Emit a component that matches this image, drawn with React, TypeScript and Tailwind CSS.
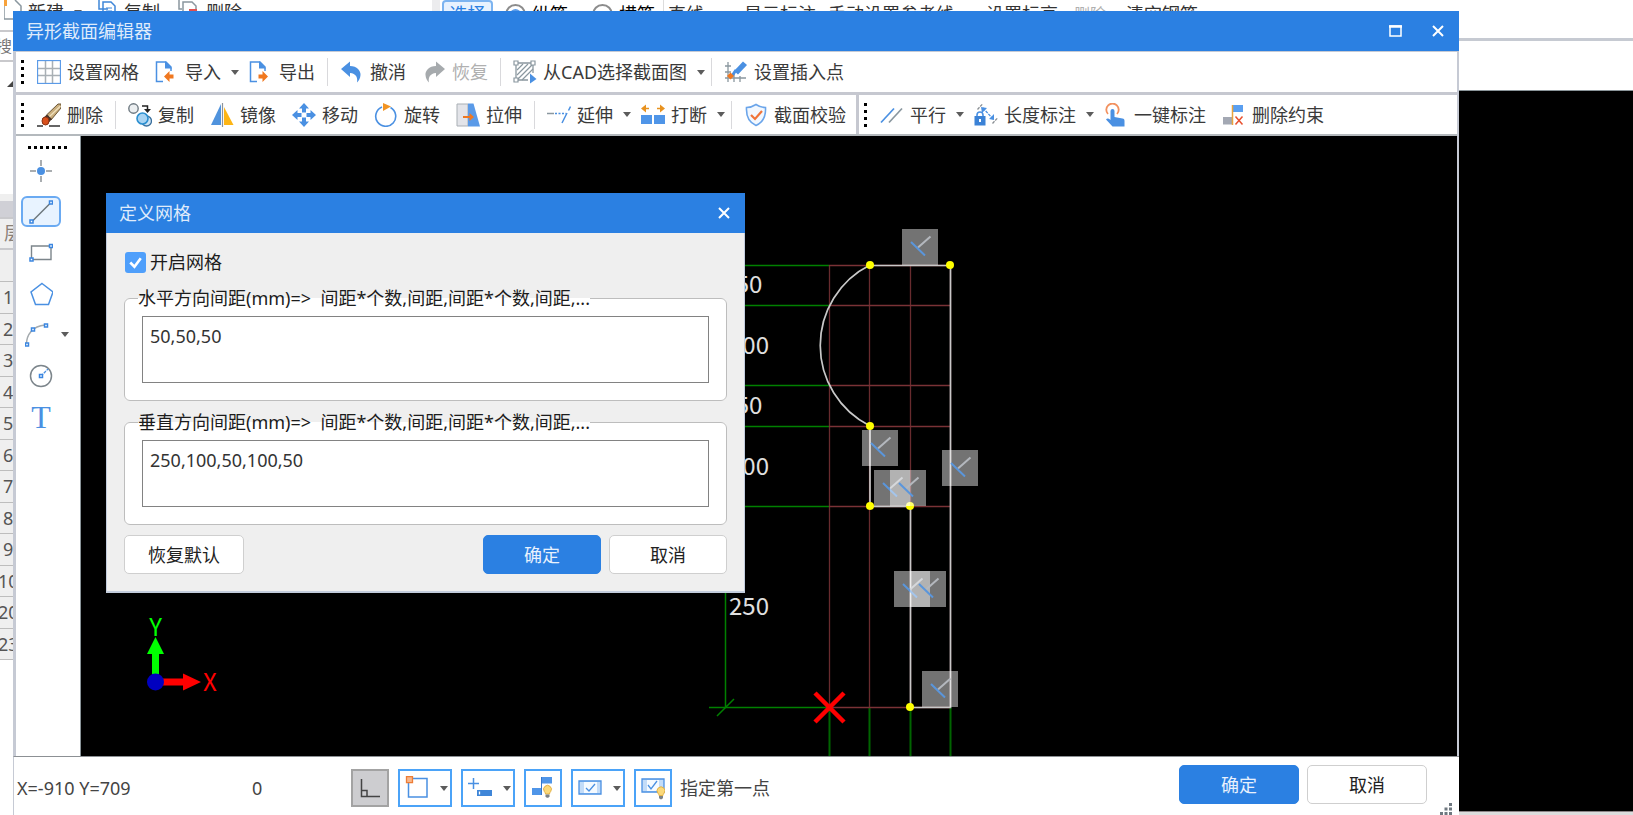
import type { ReactNode } from "react";

/* ---------- icon primitives ---------- */

const BLUE = "#4a90e2";
const SLATE = "#8a979f";
const ORANGE = "#f07820";

function Icon({ children, size = 24 }: { children: ReactNode; size?: number }) {
  return (
    <svg width={size} height={size} viewBox="0 0 24 24" fill="none" aria-hidden="true" className="shrink-0">
      {children}
    </svg>
  );
}

function Caret() {
  return (
    <svg width="8" height="5" viewBox="0 0 8 5" aria-hidden="true" className="shrink-0">
      <path d="M0 0h8L4 5z" fill="#5c5c5c" />
    </svg>
  );
}

const GridIcon = () => (
  <Icon>
    <path d="M8.5 1v22M15.5 1v22M1 8.5h22M1 15.5h22" stroke="#a9b0b5" strokeWidth="1.5" />
    <rect x="0.5" y="0.5" width="23" height="23" stroke="#5b9be8" strokeWidth="1.3" />
  </Icon>
);

function PageIcon({ out = false }: { out?: boolean }) {
  return (
    <Icon>
      <path d="M8 21.500H1.500V2H11l5 5V11" stroke={BLUE} strokeWidth="1.5" />
      <path d="M10 1l7 7.5h-7z" fill={BLUE} />
      {out ? (
        <path d="M19 16.500l-5.500-5.500v3.500h-4v4h4V22z" fill={ORANGE} />
      ) : (
        <path d="M9 16.500l5.500-5.500v3.500h4v4h-4V22z" fill={ORANGE} />
      )}
    </Icon>
  );
}

const UndoIcon = () => (
  <Icon>
    <path d="M1 9l9-7.500v4.500c7 0 11 5 10.500 9-.2 3-1.500 5.500-3.500 7.500 1-5-1-9-7-9.500v4z" fill={BLUE} />
  </Icon>
);

const RedoIcon = () => (
  <Icon>
    <path d="M23 9l-9-7.500v4.500c-7 0-11 5-10.500 9 .2 3 1.500 5.500 3.500 7.500-1-5 1-9 7-9.500v4z" fill="#a6aaad" />
  </Icon>
);

const CadIcon = () => (
  <Icon>
    <path d="M3 3h17v10M3 3v17h12" stroke={SLATE} strokeWidth="1.300" />
    <path d="M4 10l6-6M4 15L15 4M4 20L20 4M9 20L20 9" stroke={SLATE} strokeWidth="1.200" />
    <path d="M1 1h4v4H1zM18 1h4v4h-4zM1 18h4v4H1z" fill="#fff" stroke={SLATE} strokeWidth="1.200" />
    <path d="M17 13.500l6.500 5.500-6.500 4.500z" fill={BLUE} />
  </Icon>
);

const InsertPointIcon = () => (
  <Icon>
    <path d="M4 2v20M10 12v10M16 16v6M1 6h6M1 12h6M1 18h21" stroke={SLATE} strokeWidth="1.300" />
    <path d="M10 11L19 1.500l4 3.500-9 9.500z" fill={BLUE} />
    <path d="M12 10l-4 6" stroke={BLUE} strokeWidth="3" />
    <path d="M6.500 12.500l3.500 3.500-3.500 3.500L3 16z" fill={ORANGE} />
  </Icon>
);

const EraserIcon = () => (
  <Icon>
    <path d="M0 23h6M12 23h11" stroke="#333" strokeWidth="1.300" />
    <path d="M9.500 12L21 1l3 0v4L14 17z" fill="#c9ad7c" stroke="#6b5535" />
    <path d="M12 14L23.500 3" stroke="#efe0bd" strokeWidth="1.300" />
    <path d="M5.500 15.500l4.500-4 5 4.500-4.500 5z" fill="#4a3328" />
    <ellipse cx="8.500" cy="18" rx="3.500" ry="4" fill="#d9501c" stroke="#8b3212" />
  </Icon>
);

const CopyIcon = () => (
  <Icon>
    <circle cx="5.500" cy="5.500" r="4.700" fill="#eceff1" stroke="#6f7a82" strokeWidth="1.400" />
    <path d="M14 3h5.500v4" stroke="#222" strokeWidth="1.500" />
    <path d="M16 6h7l-3.500 4z" fill="#222" />
    <circle cx="18.500" cy="18" r="5" fill="#cfe4f5" stroke="#3a6f9c" strokeWidth="1.300" />
    <circle cx="14.500" cy="15.500" r="5.500" fill="#a8d3f2" stroke="#2b8fd0" strokeWidth="1.600" />
  </Icon>
);

const MirrorIcon = () => (
  <Icon>
    <path d="M11 1v21H1z" fill="#5093dd" />
    <path d="M14 4v18h9.500z" fill="#fdb515" />
    <path d="M12.500 0v24" stroke="#8d949b" strokeWidth="1.200" />
  </Icon>
);

const MoveIcon = () => (
  <Icon>
    <path
      d="M12 0l5 5.500h-3v4h-4v-4H7zM12 24l5-5.500h-3v-4h-4v4H7zM0 12l5.500-5v3h4v4h-4v3zM24 12l-5.500-5v3h-4v4h4v3z"
      fill={BLUE}
    />
  </Icon>
);

const RotateIcon = () => (
  <Icon>
    <path d="M16.500 4.500A10 10 0 1 1 8 4" stroke={BLUE} strokeWidth="1.600" />
    <path d="M9 0l8 3.500L9 8z" fill="#f29423" />
  </Icon>
);

const StretchIcon = () => (
  <Icon>
    <path d="M1 1h11v22H1z" fill="#e3e4e9" stroke="#a9afb5" />
    <path d="M12 .5h5.500L24 23.500H12z" fill="#5a9ae8" />
    <path d="M7 14h8" stroke={ORANGE} strokeWidth="2" />
    <path d="M13.500 10l4.500 4-4.500 4z" fill={ORANGE} />
  </Icon>
);

const ExtendIcon = () => (
  <Icon>
    <path d="M0 10.500h7" stroke={SLATE} strokeWidth="1.500" />
    <path d="M8 10.500h11" stroke={BLUE} strokeWidth="1.500" strokeDasharray="2 1.500" />
    <path d="M23.500 3.500l-2 4M20 10l-5 10" stroke={BLUE} strokeWidth="1.500" />
  </Icon>
);

const BreakIcon = () => (
  <Icon>
    <path d="M0 12h11v9H0zM13 12h11v9H13z" fill="#4f95e8" />
    <path d="M3 5.500h5M16 5.500h5" stroke="#e8921f" strokeWidth="1.600" />
    <path d="M5 1.500v8L0 5.500zM19 1.500v8l5-4z" fill="#e8921f" />
  </Icon>
);

const ShieldIcon = () => (
  <Icon>
    <path d="M12 1.500c3 2 6 3 9.500 3 .5 9-2.500 15-9.500 18-7-3-10-9-9.500-18 3.500 0 6.500-1 9.500-3z" fill="#f2f8ff" stroke="#6ba5ea" strokeWidth="1.600" />
    <path d="M7 12l4 4 7-8" stroke="#f0743a" strokeWidth="2.200" />
  </Icon>
);

const ParallelIcon = () => (
  <Icon>
    <path d="M1 19.500L14 5.500" stroke={BLUE} strokeWidth="1.700" />
    <path d="M9 19.500L22 5.500" stroke={SLATE} strokeWidth="1.700" />
  </Icon>
);

const LengthIcon = () => (
  <Icon>
    <path d="M3.500 6.500l5-5.500M18.500 20.500l5-5.500" stroke="#8a8f94" strokeWidth="1.300" strokeDasharray="3 1" />
    <path d="M9 5l10 11" stroke={BLUE} strokeWidth="1.300" strokeDasharray="3 1" />
    <path d="M7 4l6 1-5 5zM20 17v-6l-5 5z" fill={BLUE} />
    <path d="M3 13.500V12a3 3 0 0 1 6 0v1.500" stroke={BLUE} strokeWidth="1.600" />
    <rect x="0.500" y="13" width="11" height="9.500" fill="#3b82d6" />
    <path d="M6 16v3" stroke="#fff" strokeWidth="2" />
  </Icon>
);

const TouchIcon = () => (
  <Icon>
    <path d="M4 11a6.200 6.200 0 1 1 9 0" stroke="#f2915f" strokeWidth="1.800" />
    <path d="M6.500 8a2 2 0 0 1 4 0v6l8 1.500c1.500.3 2 1.200 2 2.500v5.500H8.500L2 16.500c1-1.500 2.500-1.500 4.500.5z" fill={BLUE} />
  </Icon>
);

const RemoveConstraintIcon = () => (
  <Icon>
    <path d="M1 14h9v7.500H1z" fill="#a3a8b3" />
    <path d="M11 2h10v7H11z" fill="#5a9ff0" />
    <path d="M10.500 2v20" stroke="#e8a33c" strokeWidth="1.500" />
    <path d="M13.500 13.500l7 8M20.500 13.500l-7 8" stroke="#e8502e" strokeWidth="1.500" />
  </Icon>
);

/* small square vertex marker used on the drawing tools */
const Handle = ({ x, y }: { x: number; y: number }) => (
  <rect x={x - 1.5} y={y - 1.5} width="3" height="3" fill="#fff" stroke="#3b86e0" strokeWidth="1.500" />
);

const PointTool = () => (
  <Icon>
    <path d="M12 1v6M12 17v6M1 12h6M17 12h6" stroke="#8d9296" strokeWidth="1.500" />
    <circle cx="12" cy="12" r="4" fill={BLUE} />
  </Icon>
);

const LineTool = () => (
  <Icon>
    <path d="M3 21.500L21.500 3" stroke="#6c757b" strokeWidth="1.500" />
    <Handle x={2.5} y={21.5} />
    <Handle x={22} y={2.5} />
  </Icon>
);

const RectTool = () => (
  <Icon>
    <path d="M2.500 5h19.500v13.500H2.500z" stroke="#7c858b" strokeWidth="1.400" />
    <Handle x={2.5} y={18.5} />
    <Handle x={22} y={5} />
  </Icon>
);

const PolygonTool = () => (
  <Icon>
    <path d="M13 1.500l11 8.500-4.500 12.500H6.500L2 10z" stroke={BLUE} strokeWidth="1.500" />
  </Icon>
);

const ArcTool = () => (
  <Icon>
    <path d="M1.500 21c0-9 6-18 18.500-19" stroke="#a4aaae" strokeWidth="1.500" />
    <Handle x={2} y={21.5} />
    <Handle x={8} y={6.5} />
    <Handle x={21} y={2.5} />
  </Icon>
);

const CircleTool = () => (
  <Icon>
    <circle cx="12" cy="12" r="10.500" stroke="#7c858b" strokeWidth="1.500" />
    <path d="M12 12l7-7" stroke={BLUE} strokeWidth="1.300" strokeDasharray="3 1" />
    <Handle x={12} y={12} />
  </Icon>
);

const OrthoIcon = () => (
  <Icon>
    <path d="M3.500 3v17.500H22M3.500 14.500H9v6" stroke="#444" strokeWidth="1.500" />
  </Icon>
);

const SnapIcon = () => (
  <Icon>
    <path d="M3.500 2.500H22V21H3.500z" stroke={BLUE} strokeWidth="1.500" />
    <path d="M1.500 .7h6v6h-6z" fill="#f8b68a" stroke="#ee7d35" strokeWidth="1.300" />
  </Icon>
);

const CoordIcon = () => (
  <Icon>
    <path d="M0 7.500h11M5.500 2v11" stroke={BLUE} strokeWidth="1.500" />
    <path d="M9 14h15v6H9z" fill="#3f86d8" />
    <path d="M11.500 15.500v3" stroke="#fff" strokeWidth="1.300" />
  </Icon>
);

const Bulb = () => (
  <>
    <path d="M13.300 15.500a3.900 3.900 0 1 1 6.400 0c-.8 1-1.200 1.600-1.200 2.500h-4c0-.9-.4-1.500-1.200-2.500z" fill="#fbd97a" stroke="#e0ac3c" strokeWidth=".9" />
    <path d="M14.500 18.500h4v2l-1.200 1.200h-1.600l-1.200-1.200z" fill="#7d8285" />
  </>
);

const ConstraintBulbIcon = () => (
  <Icon>
    <path d="M1 12h10v7H1zM11 1h10v6.500H11z" fill="#4f95e8" />
    <path d="M10.500 1v18" stroke="#3577cc" />
    <Bulb />
  </Icon>
);

const CheckPanelIcon = () => (
  <Icon>
    <path d="M1 5h22v13H1z" fill="#c3dcf8" stroke={BLUE} strokeWidth="1.300" />
    <path d="M6 6h13v11H6z" fill="#f5faff" />
    <path d="M8 12l3 3 6-7" stroke={BLUE} strokeWidth="1.300" />
  </Icon>
);

const CheckBulbIcon = () => (
  <Icon>
    <path d="M1 3h22v13H1z" fill="#c3dcf8" stroke={BLUE} strokeWidth="1.300" />
    <path d="M6 4h12v11H6z" fill="#f5faff" />
    <path d="M7 9l3 4 6-8" stroke={BLUE} strokeWidth="1.300" />
    <g transform="translate(3.500 1.500)">
      <Bulb />
    </g>
  </Icon>
);

/* ---------- shared widgets ---------- */

function ToolButton({
  icon,
  label,
  menu = false,
  disabled = false,
}: {
  icon: ReactNode;
  label: string;
  menu?: boolean;
  disabled?: boolean;
}) {
  return (
    <button
      type="button"
      disabled={disabled}
      className={`flex h-8 shrink-0 items-center gap-1.5 rounded-md pl-1.5 text-[#3a3a3a] hover:bg-[#e8f2fe] disabled:text-[#b0b0b0] ${
        menu ? "pr-0.5" : "pr-2"
      }`}
    >
      {icon}
      <span className={menu ? "flex items-center gap-2.5" : "flex items-center"}>
        {label}
        {menu && <Caret />}
      </span>
    </button>
  );
}

const Separator = () => <div className="mr-1 ml-0.5 h-7 w-px shrink-0 bg-[#d9d9dc]" />;

function Grip() {
  return (
    <div className="flex w-2 shrink-0 flex-col gap-1">
      {[0, 1, 2, 3].map((i) => (
        <span key={i} className="size-[3px] bg-black" />
      ))}
    </div>
  );
}

function DialogButton({ label, primary = false, size }: { label: string; primary?: boolean; size: string }) {
  return (
    <button
      type="button"
      className={`rounded-[5px] border ${size} ${
        primary ? "border-[#2b80e2] bg-[#2b80e2] text-[#e8f1fd]" : "border-[#cfcfcf] bg-white text-[#222]"
      }`}
    >
      {label}
    </button>
  );
}

const CloseGlyph = () => (
  <svg width="12" height="12" viewBox="0 0 12 12" aria-hidden="true">
    <path d="M1 1l10 10M11 1L1 11" stroke="#fff" strokeWidth="2" />
  </svg>
);

/* ---------- application window behind the editor ---------- */

const floors = ["1", "2", "3", "4", "5", "6", "7", "8", "9", "10", "20", "23"];

function HostApplication() {
  return (
    <div className="flex h-full">
      <div className="flex w-[432px] shrink-0 flex-col">
        <div className="flex h-[30px] shrink-0 items-start pl-1 text-[#333]">
          <svg width="22" height="22" viewBox="0 0 22 22" fill="none" aria-hidden="true">
            <path d="M0 0v19h17V6l-6-6" stroke="#8a979f" strokeWidth="1.500" />
            <path d="M0 0h3v6H0z" fill="#f7a23b" />
          </svg>
          <span className="-mt-0.5 ml-0.5 flex w-[68px] items-center gap-2.5 leading-7">
            新建 <Caret />
          </span>
          <svg width="18" height="22" viewBox="0 0 18 22" fill="none" aria-hidden="true" className="ml-0.5">
            <path d="M10 9H1V0M5 2h8l4 4v14H5z" stroke="#3f86d8" strokeWidth="1.500" />
            <path d="M8 8h6M8 11h6" stroke="#3f86d8" />
          </svg>
          <span className="-mt-0.5 ml-2 w-[52px] leading-7">复制</span>
          <svg width="20" height="22" viewBox="0 0 20 22" fill="none" aria-hidden="true" className="ml-0.5">
            <path d="M4 9H1V0M5 2h9l4 4v14H5z" stroke="#8a979f" strokeWidth="1.500" />
            <path d="M11 10h8" stroke="#e05050" strokeWidth="2" />
          </svg>
          <span className="-mt-0.5 ml-2 leading-7">删除</span>
        </div>
        <div className="flex h-8 shrink-0 items-center border-y-2 border-[#c9c9cc] text-base text-[#777]">
          <span className="-ml-1">搜</span>
        </div>
        <div className="h-[132px] shrink-0 pt-4 pl-[7px]">
          <svg width="10" height="9" viewBox="0 0 10 9" aria-hidden="true">
            <path d="M0 9L9 0v9z" fill="#444" />
          </svg>
        </div>
        <div className="h-[23px] shrink-0 border-t-[7px] border-t-[#efefef] bg-[#d0d0d6]" />
        <div className="h-[33px] shrink-0 border-y-2 border-[#c9c9cc] bg-[#efefef] pl-1 leading-[29px] text-[#8a8078]">层</div>
        <div className="h-8 shrink-0 border-b border-[#bdbdbd] bg-[#efefef]" />
        <ol className="grid h-[378px] shrink-0 auto-rows-fr bg-[#efefef] text-[#555]">
          {floors.map((f) => (
            <li key={f} className="flex items-center border-b border-[#bdbdbd]">
              <span className={f.length > 1 ? "-ml-0.5" : "ml-[3px]"}>{f}</span>
            </li>
          ))}
        </ol>
      </div>

      <div className="flex min-w-0 flex-1 flex-col">
        <div className="flex h-[38px] shrink-0 items-start border-l-[8px] border-[#ececee] pl-0.5 whitespace-nowrap text-[#333]">
          <button type="button" className="h-7 w-[51px] shrink-0 rounded-sm border-2 border-[#7db4f0] bg-[#e8f2fe] text-[#2b80e2]">
            选择
          </button>
          <label className="ml-3 flex h-7 shrink-0 items-center gap-1.5 text-black">
            <input type="radio" name="rebar" defaultChecked className="size-[21px] appearance-none rounded-full border-2 border-[#8c8c8c] bg-[#5b9be8] bg-clip-content p-[3px]" />
            纵筋
          </label>
          <label className="ml-6 flex h-7 shrink-0 items-center gap-1.5 text-black">
            <input type="radio" name="rebar" className="size-[21px] appearance-none rounded-full border-2 border-[#8c8c8c] bg-white" />
            横筋
          </label>
          <span className="ml-2 h-7 border-l border-[#dcdcdc] pl-1 leading-7">直线</span>
          <span className="ml-10 h-7 leading-7">显示标注</span>
          <span className="ml-3 h-7 leading-7">手动设置参考线</span>
          <span className="ml-8 h-7 leading-7">设置标高</span>
          <span className="ml-4 h-7 text-base leading-7 text-[#b0b0b0]">删除</span>
          <span className="ml-5 h-7 leading-7">清空钢筋</span>
        </div>
        <div className="h-[53px] shrink-0 border-t-[3px] border-b border-t-[#c6cad2] border-b-[#8a9499] bg-white" />
        <div className="flex-1 bg-black" />
        <div className="h-1 shrink-0 border-t border-[#8c8486] bg-[#dcdcdc]" />
      </div>
    </div>
  );
}

/* ---------- section drawing ---------- */

const columns = [829, 869, 910, 950];
const rows = [265, 305, 385, 426, 506, 707];
const vertices = [
  [870, 265],
  [950, 265],
  [870, 426],
  [870, 506],
  [910, 506],
  [910, 707],
];
const constraints = [
  [902, 229],
  [862, 430],
  [874, 470],
  [890, 470],
  [942, 450],
  [894, 571],
  [910, 571],
  [922, 671],
];
const dimensions: [string, number][] = [
  ["50", 284],
  ["100", 345],
  ["50", 405],
  ["100", 466],
  ["250", 606],
];

function SectionDrawing() {
  return (
    <svg width="1376" height="620" viewBox="81 136 1376 620" fill="none" className="block shrink-0">
      <g stroke="#008000" strokeWidth="1.500">
        {rows.map((y) => (
          <path key={y} d={`M709 ${y + 0.5}H829`} />
        ))}
        {columns.map((x) => (
          <path key={x} d={`M${x + 0.5} 707V757`} stroke="#006400" strokeWidth="2" />
        ))}
        <path d="M725.500 265V707M717 716l17-17" />
      </g>
      <g stroke="#7a3236" strokeWidth="1.300">
        {rows.map((y) => (
          <path key={y} d={`M829 ${y + 0.5}H950`} />
        ))}
        {columns.map((x) => (
          <path key={x} d={`M${x + 0.5} 265V707`} strokeOpacity="0.85" />
        ))}
      </g>
      <path
        d="M870 265.500H950.500V707.500H910.500V506.500H870V426A90 90 0 0 1 870 265"
        stroke="#c8c8c8"
        strokeWidth="1.700"
      />
      {vertices.map(([x, y]) => (
        <circle key={`${x}-${y}`} cx={x} cy={y} r="4" fill="#ffff00" />
      ))}
      {constraints.map(([x, y]) => (
        <g key={`${x}-${y}`} transform={`translate(${x} ${y})`}>
          <rect width="36" height="36" fill="#fff" fillOpacity="0.450" />
          <path d="M16 18.500L28.500 7.500" stroke="#b4b8be" strokeWidth="2" />
          <path d="M9 13l14 13.500" stroke="#5a96dc" strokeWidth="2" />
        </g>
      ))}
      <path d="M815 693l29 29M844 693l-29 29" stroke="#ff0000" strokeWidth="4.500" />
      <g fill="#e0e0e0" fontSize="24" textAnchor="middle" fontFamily="'Noto Sans CJK SC', sans-serif">
        {dimensions.map(([t, y]) => (
          <text key={y} x="749" y={y + 9}>
            {t}
          </text>
        ))}
      </g>
      <path d="M155.500 637l8.500 17h-5v20h-7v-20h-5z" fill="#00ff00" />
      <path d="M201 682l-18-8.500v5h-21v7h21v5z" fill="#ff0000" />
      <circle cx="155.500" cy="682" r="8.500" fill="#0000c0" />
      <g fontSize="24" textAnchor="middle" fontFamily="'Noto Sans CJK SC', sans-serif">
        <text x="155.500" y="636" fill="#00ff00">Y</text>
        <text x="210" y="691" fill="#ff0000">X</text>
      </g>
    </svg>
  );
}

/* ---------- grid definition dialog ---------- */

function SpacingField({ id, legend, value }: { id: string; legend: string; value: string }) {
  return (
    <fieldset className="rounded-md border border-[#bdbdbd] bg-white px-[17px] pb-[17px]">
      <legend className="-ml-1 h-6 leading-6 whitespace-pre text-[#1c1c1c]">
        <label htmlFor={id}>{legend}</label>
      </legend>
      <textarea
        id={id}
        defaultValue={value}
        className="mt-1.5 block h-[67px] w-full resize-none border border-[#828282] bg-white px-[7px] py-[7px] leading-6 text-[#333] outline-none"
      />
    </fieldset>
  );
}

function GridDialog() {
  return (
    <section
      aria-label="定义网格"
      className="absolute top-[182px] left-[93px] flex w-[639px] flex-col border-x border-b-2 border-[#c3cddd] bg-[#efefef]"
    >
      <header className="-mx-px flex h-10 items-center justify-between bg-[#2b80e2] pr-[15px] pl-[13px] text-[#dfebfb]">
        定义网格
        <button type="button" aria-label="关闭">
          <CloseGlyph />
        </button>
      </header>
      <div className="flex flex-col px-[17px] py-[17px]">
        <label className="flex h-6 items-center gap-1 pl-px text-[#1c1c1c]">
          <span className="relative flex size-[21px]">
            <input type="checkbox" defaultChecked className="size-full appearance-none rounded-[3px] bg-[#4f9ffb]" />
            <svg viewBox="0 0 20 20" fill="none" aria-hidden="true" className="pointer-events-none absolute inset-0">
              <path d="M5 10l4 4 6-8" stroke="#fff" strokeWidth="2.500" />
            </svg>
          </span>
          开启网格
        </label>
        <div className="mt-3 flex flex-col gap-[9px]">
          <SpacingField id="gap-x" legend="水平方向间距(mm)=>  间距*个数,间距,间距*个数,间距,..." value="50,50,50" />
          <SpacingField id="gap-y" legend="垂直方向间距(mm)=>  间距*个数,间距,间距*个数,间距,..." value="250,100,50,100,50" />
        </div>
        <div className="mt-2.5 flex gap-2">
          <DialogButton label="恢复默认" size="h-[39px] w-[120px]" />
          <div className="flex-1" />
          <DialogButton label="确定" primary size="h-[39px] w-[118px]" />
          <DialogButton label="取消" size="h-[39px] w-[118px]" />
        </div>
      </div>
    </section>
  );
}

/* ---------- section editor window ---------- */

const drawingTools: { name: string; icon: ReactNode; active?: boolean; menu?: boolean }[] = [
  { name: "点", icon: <PointTool /> },
  { name: "直线", icon: <LineTool />, active: true },
  { name: "矩形", icon: <RectTool /> },
  { name: "多边形", icon: <PolygonTool /> },
  { name: "圆弧", icon: <ArcTool />, menu: true },
  { name: "圆", icon: <CircleTool /> },
  { name: "文字", icon: <span className="font-['Liberation_Serif',serif] text-[32px] leading-8 text-[#4a90e2]">T</span> },
];

const statusTools: { name: string; icon: ReactNode; pressed?: boolean; menu?: boolean }[] = [
  { name: "正交", icon: <OrthoIcon />, pressed: true },
  { name: "捕捉", icon: <SnapIcon />, menu: true },
  { name: "坐标输入", icon: <CoordIcon />, menu: true },
  { name: "显示约束", icon: <ConstraintBulbIcon /> },
  { name: "校验", icon: <CheckPanelIcon />, menu: true },
  { name: "显示校验", icon: <CheckBulbIcon /> },
];

function SectionEditor() {
  return (
    <main className="absolute top-[11px] right-[174px] bottom-0 left-[13px] flex flex-col bg-white">
      <header className="flex h-10 shrink-0 items-center justify-between bg-[#2b80e2] pr-[15px] pl-[13px] text-[#dfebfb]">
        <h1>异形截面编辑器</h1>
        <div className="flex items-center gap-[30px]">
          <button type="button" aria-label="最大化">
            <svg width="13" height="12" viewBox="0 0 13 12" fill="none" aria-hidden="true">
              <path d="M1 1h11v10H1z" stroke="#fff" strokeWidth="1.500" />
              <path d="M0 1.500h13" stroke="#fff" strokeWidth="2.500" />
            </svg>
          </button>
          <button type="button" aria-label="关闭">
            <CloseGlyph />
          </button>
        </div>
      </header>

      <div className="flex min-h-0 flex-1 flex-col border-t border-r-2 border-l-[3px] border-[#c6cad4]">
        <div className="flex h-10 shrink-0 items-center gap-0.5 pl-[5px]">
          <Grip />
          <ToolButton icon={<GridIcon />} label="设置网格" />
          <ToolButton icon={<PageIcon />} label="导入" menu />
          <ToolButton icon={<PageIcon out />} label="导出" />
          <Separator />
          <ToolButton icon={<UndoIcon />} label="撤消" />
          <ToolButton icon={<RedoIcon />} label="恢复" disabled />
          <Separator />
          <ToolButton icon={<CadIcon />} label="从CAD选择截面图" menu />
          <Separator />
          <ToolButton icon={<InsertPointIcon />} label="设置插入点" />
        </div>
        <div className="flex h-[44px] shrink-0 border-t-[3px] border-b-2 border-t-[#c6c8d0] border-b-[#b4b9bd]">
          <div className="flex items-center gap-0.5 border-r-[3px] border-[#c6c8d0] pr-0.5 pl-[5px]">
            <Grip />
            <ToolButton icon={<EraserIcon />} label="删除" />
            <Separator />
            <ToolButton icon={<CopyIcon />} label="复制" />
            <ToolButton icon={<MirrorIcon />} label="镜像" />
            <ToolButton icon={<MoveIcon />} label="移动" />
            <ToolButton icon={<RotateIcon />} label="旋转" />
            <ToolButton icon={<StretchIcon />} label="拉伸" />
            <Separator />
            <ToolButton icon={<ExtendIcon />} label="延伸" menu />
            <ToolButton icon={<BreakIcon />} label="打断" menu />
            <Separator />
            <ToolButton icon={<ShieldIcon />} label="截面校验" />
          </div>
          <div className="flex items-center gap-0.5 pl-[5px]">
            <Grip />
            <ToolButton icon={<ParallelIcon />} label="平行" menu />
            <ToolButton icon={<LengthIcon />} label="长度标注" menu />
            <ToolButton icon={<TouchIcon />} label="一键标注" />
            <ToolButton icon={<RemoveConstraintIcon />} label="删除约束" />
          </div>
        </div>

        <div className="flex min-h-0 flex-1">
          <nav aria-label="绘图工具" className="flex w-16 shrink-0 flex-col gap-[5px] pt-2.5 pl-[5px]">
            <div className="flex gap-[3px] pl-[7px]">
              {[0, 1, 2, 3, 4, 5, 6].map((i) => (
                <span key={i} className="size-[3px] bg-black" />
              ))}
            </div>
            <div className="flex flex-col gap-2">
              {drawingTools.map((t) => (
                <div key={t.name} className="flex h-[33px] shrink-0 items-center">
                  <button
                    type="button"
                    aria-label={t.name}
                    className={`flex items-center justify-center rounded-md border-2 ${
                      t.active ? "h-[31px] w-10 border-[#6aaaf2] bg-[#e8f3ff]" : "h-[33px] w-10 border-transparent"
                    } ${t.menu ? "pr-2" : ""}`}
                  >
                    {t.icon}
                  </button>
                  {t.menu && <Caret />}
                </div>
              ))}
            </div>
          </nav>
          <div className="flex min-w-0 flex-1 overflow-hidden border-l border-[#8a9499] bg-black">
            <SectionDrawing />
          </div>
        </div>
      </div>

      <footer className="flex h-[59px] shrink-0 items-start border-t border-l border-t-[#8c9094] border-l-[#c6cad4] pt-2 pl-[3px] text-[#444]">
        <div className="flex items-center pt-1">
          <output className="w-[235px] whitespace-nowrap">X=-910 Y=709</output>
          <output className="w-[99px]">0</output>
          <div className="flex gap-[9px]">
            {statusTools.map((t) => (
              <button
                key={t.name}
                type="button"
                aria-label={t.name}
                className={`flex h-[38px] items-center border-2 ${
                  t.pressed ? "border-[#a3a3a3] bg-[#cdcdd0]" : "border-[#4ba3f8] bg-white"
                } ${t.menu ? "w-[54px] gap-[11px] pl-[5px]" : "w-[38px] justify-center"}`}
              >
                {t.icon}
                {t.menu && <Caret />}
              </button>
            ))}
          </div>
          <span className="ml-2">指定第一点</span>
        </div>
        <div className="flex-1" />
        <div className="flex gap-2">
          <DialogButton label="确定" primary size="h-[39px] w-[120px]" />
          <DialogButton label="取消" size="h-[39px] w-[120px]" />
        </div>
        <svg width="12" height="12" viewBox="0 0 12 12" fill="#6f7880" aria-hidden="true" className="mr-[7px] ml-[13px] shrink-0 self-end">
          <path d="M9 0h3v3H9zM4.500 4.500h3v3h-3zM9 4.500h3v3H9zM0 9h3v3H0zM4.500 9h3v3h-3zM9 9h3v3H9z" />
        </svg>
      </footer>

      <GridDialog />
    </main>
  );
}

export default function App() {
  return (
    <div className="relative h-screen overflow-hidden bg-white font-['Noto_Sans','Noto_Sans_CJK_SC',sans-serif] text-lg leading-6">
      <HostApplication />
      <SectionEditor />
    </div>
  );
}
